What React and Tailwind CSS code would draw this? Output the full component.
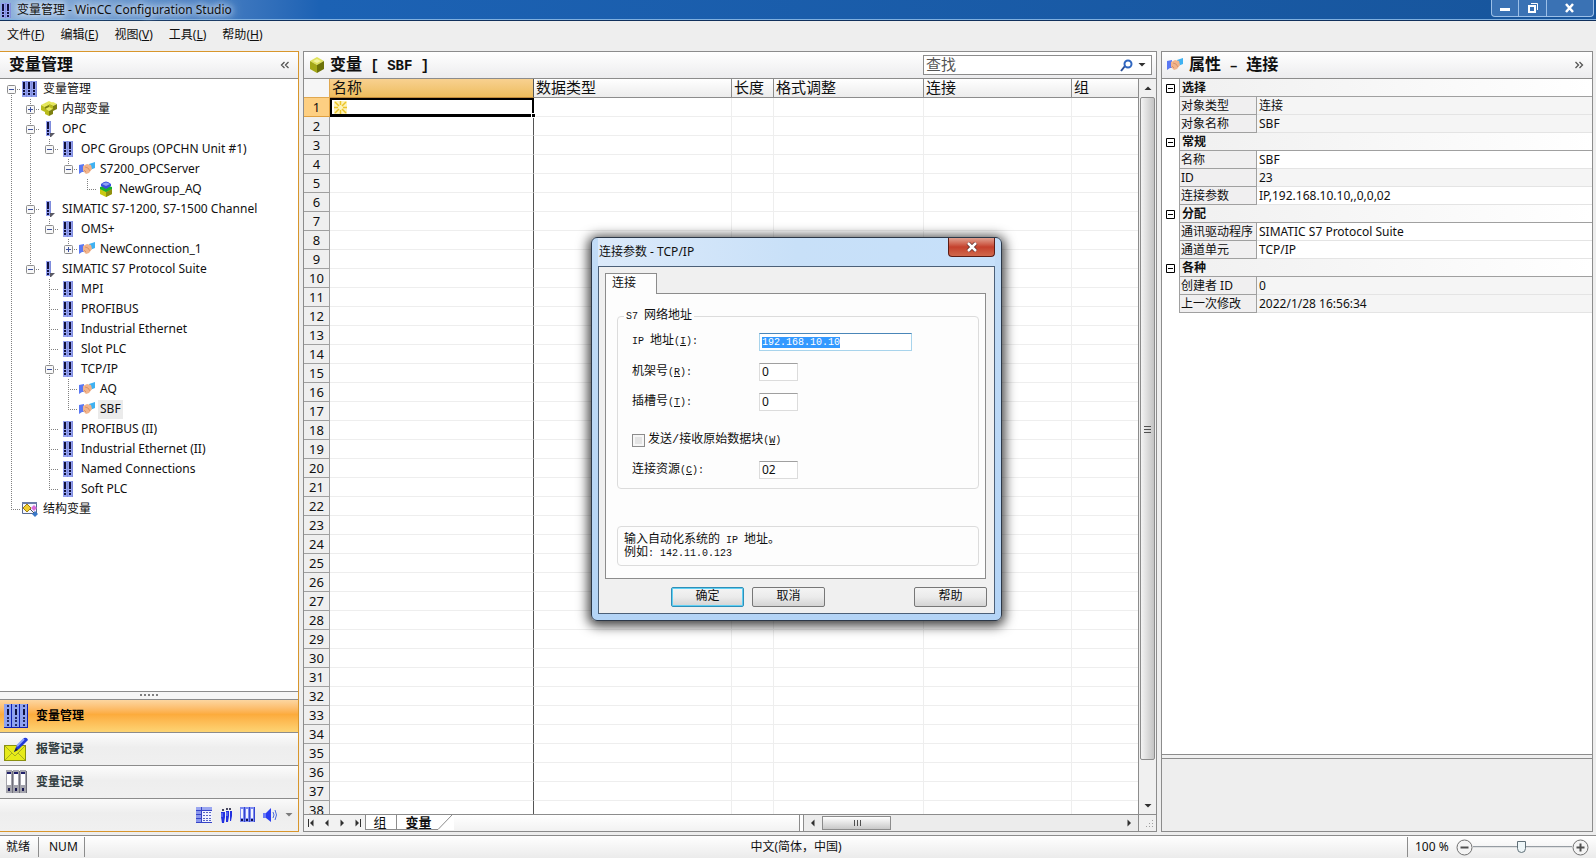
import React, { useEffect, useRef } from 'react';

const TREE = [
  { guides: 'f', box: 'minus', icon: 'root', label: '变量管理' },
  { guides: '|t', box: 'plus', icon: 'cubes', label: '内部变量' },
  { guides: '|t', box: 'minus', icon: 'driver', label: 'OPC' },
  { guides: '||l', box: 'minus', icon: 'unit', label: 'OPC Groups (OPCHN Unit #1)' },
  { guides: '|| l', box: 'minus', icon: 'link', label: 'S7200_OPCServer' },
  { guides: '||  l', icon: 'group', label: 'NewGroup_AQ' },
  { guides: '|t', box: 'minus', icon: 'driver', label: 'SIMATIC S7-1200, S7-1500 Channel' },
  { guides: '||l', box: 'minus', icon: 'unit', label: 'OMS+' },
  { guides: '|| l', box: 'plus', icon: 'link', label: 'NewConnection_1' },
  { guides: '|l', box: 'minus', icon: 'driver', label: 'SIMATIC S7 Protocol Suite' },
  { guides: '| t', icon: 'unit', label: 'MPI' },
  { guides: '| t', icon: 'unit', label: 'PROFIBUS' },
  { guides: '| t', icon: 'unit', label: 'Industrial Ethernet' },
  { guides: '| t', icon: 'unit', label: 'Slot PLC' },
  { guides: '| t', box: 'minus', icon: 'unit', label: 'TCP/IP' },
  { guides: '| |t', icon: 'link', label: 'AQ' },
  { guides: '| |l', icon: 'link', label: 'SBF', selected: true },
  { guides: '| t', icon: 'unit', label: 'PROFIBUS (II)' },
  { guides: '| t', icon: 'unit', label: 'Industrial Ethernet (II)' },
  { guides: '| t', icon: 'unit', label: 'Named Connections' },
  { guides: '| l', icon: 'unit', label: 'Soft PLC' },
  { guides: 'l', icon: 'struct', label: '结构变量' },
];

const MENUS = [
  ['文件', 'F'],
  ['编辑', 'E'],
  ['视图', 'V'],
  ['工具', 'L'],
  ['帮助', 'H'],
];

const PROPERTIES = [
  { title: '选择', rows: [['对象类型', '连接'], ['对象名称', 'SBF']] },
  { title: '常规', rows: [['名称', 'SBF', true], ['ID', '23'], ['连接参数', 'IP,192.168.10.10,,0,0,02', true]] },
  { title: '分配', rows: [['通讯驱动程序', 'SIMATIC S7 Protocol Suite', true], ['通道单元', 'TCP/IP', true]] },
  { title: '各种', rows: [['创建者 ID', '0'], ['上一次修改', '2022/1/28 16:56:34']] },
];

/* ---------- icons ---------- */

const Bar = ({ x, h = 16 }) => (
  <g>
    <rect x={x} y="0" width="5" height={h} fill="#93a0f0" />
    <rect x={x + 4} y="0" width="1" height={h} fill="#7f8cdc" />
    <rect x={x + 1} y="1" width="2" height="7" fill="#10103c" />
    <rect x={x + 1} y="9" width="2" height="2" fill="#10103c" />
    <rect x={x + 1} y="12" width="2" height="2" fill="#10103c" />
  </g>
);

const RootIcon = () => (
  <svg width="16" height="16" viewBox="0 0 16 16">
    <Bar x={0} /><Bar x={5} /><Bar x={10} />
  </svg>
);

const UnitIcon = () => (
  <svg width="16" height="16" viewBox="0 0 16 16">
    <Bar x={3} /><Bar x={8} />
  </svg>
);

const DriverIcon = () => (
  <svg width="16" height="16" viewBox="0 0 16 16">
    <Bar x={5} h={15} />
    <path d="M9 12h5l-4 4H9z" fill="#5a5a66" />
  </svg>
);

const LinkIcon = () => (
  <svg width="16" height="16" viewBox="0 0 16 16">
    <path d="M0 4l5-1v8l-2 0-3 2z" fill="#5a78f4" />
    <path d="M10 3l6-2v6l-5 2z" fill="#3fb2f2" />
    <path d="M4 5l4-2 4 1 1 4-3 4-3 1-3-3z" fill="#f2b48c" />
    <path d="M6 6l3 1 2 3M5 9l2 2" stroke="#d8946c" fill="none" />
  </svg>
);

const Cube = ({ x, y }) => (
  <g transform={`translate(${x} ${y})`}>
    <path d="M0 2l4-2 4 2-4 2z" fill="#e6e85a" />
    <path d="M0 2l4 2v5l-4-2z" fill="#b9bc1c" />
    <path d="M8 2l-4 2v5l4-2z" fill="#7d8010" />
  </g>
);

const CubesIcon = () => (
  <svg width="16" height="16" viewBox="0 0 16 16">
    <Cube x={4} y={0} /><Cube x={0} y={2} /><Cube x={8} y={1} /><Cube x={4} y={6} />
  </svg>
);

const GroupIcon = () => (
  <svg width="16" height="16" viewBox="0 0 16 16">
    <path d="M2 8l6-3 6 3v5l-6 3-6-3z" fill="#c9c912" />
    <path d="M8 11l6-3v5l-6 3z" fill="#8f9010" />
    <path d="M2 6l6-2 6 2v2l-6 3-6-3z" fill="#18b030" />
    <path d="M3 3q5-5 10 0v2l-5 3-5-3z" fill="#3a50e0" />
    <path d="M4 3q4-3 8 0l-4 2z" fill="#8ea2f8" />
  </svg>
);

const StructIcon = () => (
  <svg width="16" height="16" viewBox="0 0 16 16">
    <path d="M.5 1.500h14v11H.5z" fill="#f4f6ff" stroke="#5a6a90" />
    <rect x="0" y="1" width="15" height="2" fill="#6a7ca8" />
    <path d="M5 3l4 4-4 4-4-4z" fill="#f0cc30" stroke="#a08010" />
    <path d="M12 4l3 3-3 3-3-3z" fill="#d86ad8" />
    <path d="M13 10l3 3-3 3-3-3z" fill="#3a78c8" />
    <path d="M8 8l4 4" stroke="#555" />
  </svg>
);

const TREE_ICONS = {
  root: RootIcon,
  cubes: CubesIcon,
  driver: DriverIcon,
  unit: UnitIcon,
  link: LinkIcon,
  group: GroupIcon,
  struct: StructIcon,
};

const BigCubeIcon = () => (
  <svg width="16" height="16" viewBox="0 0 16 16">
    <path d="M1 4l7-4 7 4-7 4z" fill="#dfe25a" />
    <path d="M1 4l7 4v8l-7-4z" fill="#a3a818" />
    <path d="M15 4l-7 4v8l7-4z" fill="#6d7208" />
    <path d="M4 4l4-2 4 2-4 2z" fill="#f2f4a0" />
  </svg>
);

const TagNavIcon = () => (
  <svg width="24" height="24" viewBox="0 0 24 24">
    <rect width="24" height="24" fill="#8ea2f0" />
    {[0, 8, 16].map((x) => (
      <g key={x}>
        <rect x={x + 7} y="0" width="1" height="24" fill="#1020b0" />
        <rect x={x + 3} y="1" width="2" height="2" fill="#222a66" />
        <rect x={x + 3} y="5" width="2" height="6" fill="#0c1040" />
        <rect x={x + 3} y="13" width="2" height="2" fill="#222a66" />
        <rect x={x + 3} y="16" width="2" height="2" fill="#222a66" />
        <rect x={x + 3} y="20" width="2" height="2" fill="#222a66" />
      </g>
    ))}
    <rect y="23" width="24" height="1" fill="#1020b0" />
  </svg>
);

const AlarmNavIcon = () => (
  <svg width="24" height="24" viewBox="0 0 24 24">
    <rect x="0.5" y="8.5" width="21" height="15" fill="#e6ea18" stroke="#8a9010" />
    <path d="M1 9l10 10L21 9M1 23l7-7M21 23l-7-7" fill="none" stroke="#a8ae20" />
    <path d="M10 15l2-5L20 1q3-1 4 2l-9 9z" fill="#2038d8" />
    <path d="M13 9l7-7" stroke="#8aa0ff" strokeWidth="2" />
    <path d="M10 15l2-4 2 2z" fill="#222" />
  </svg>
);

const LogNavIcon = () => (
  <svg width="24" height="24" viewBox="0 0 24 24">
    {[2, 9, 16].map((x) => (
      <g key={x}>
        <rect x={x} y="0" width="6" height="23" fill="#a4a4ac" />
        <rect x={x + 1} y="4" width="4" height="11" fill="#ffffff" />
        <rect x={x + 1} y="2" width="4" height="2" fill="#20206a" />
        <rect x={x + 2} y="18" width="2" height="3" fill="#181850" />
        <rect x={x + 6} y="1" width="1" height="22" fill="#70707a" />
      </g>
    ))}
  </svg>
);

const ListTrayIcon = () => (
  <svg width="16" height="16" viewBox="0 0 16 16">
    <rect width="16" height="16" fill="#f0f2ff" />
    <rect width="5" height="16" fill="#8a96ec" />
    <rect width="16" height="3" fill="#9aa6f0" />
    <path d="M0 3.500h16M0 7.500h5M0 11.500h5M0 15.500h16M5.500 0v16" stroke="#3644c8" />
    <path d="M7 5.500h9M7 8.500h9M7 11.500h9M7 13.500h9" stroke="#5864c0" strokeDasharray="2 1" />
  </svg>
);

const UsersTrayIcon = () => (
  <svg width="16" height="16" viewBox="0 0 16 16">
    <g fill="#101030">
      <circle cx="5" cy="3" r="1" /><circle cx="9" cy="2" r="1" /><circle cx="12" cy="2" r="1" />
    </g>
    <path d="M3 5h4v5l-1 6H4l-1-6zM8 4h3v5l-1 6H8zM12 4h2v5l-1 5h-1z" fill="#2230e0" />
    <path d="M4 6v4M9 5v4" stroke="#8a9cff" />
  </svg>
);

const LogTrayIcon = () => (
  <svg width="16" height="16" viewBox="0 0 16 16">
    {[0, 5, 10].map((x) => (
      <g key={x}>
        <rect x={x} y="0" width="5" height="15" fill="#7c8af0" />
        <rect x={x + 4} y="0" width="1" height="15" fill="#3444d0" />
        <rect x={x + 1} y="2" width="2" height="9" fill="#f2f4ff" />
        <rect x={x + 1} y="12" width="2" height="2" fill="#101050" />
      </g>
    ))}
  </svg>
);

const SpeakerTrayIcon = () => (
  <svg width="16" height="16" viewBox="0 0 16 16">
    <path d="M1 6h3v5H1z" fill="#6a7cf8" />
    <path d="M4 6l5-5v14l-5-4z" fill="#2a3cf0" />
    <path d="M11 5q2 3 0 6M13 3q3 5 0 10" fill="none" stroke="#4a6ae0" />
  </svg>
);

const Chevron = ({ dir }) => (
  <svg width="10" height="8" viewBox="0 0 10 8" fill="none" stroke="#555" strokeWidth="1.300">
    {dir === 'left' ? <path d="M4.500 1L1.500 4l3 3M8.500 1L5.500 4l3 3" /> : <path d="M1.500 1l3 3-3 3M5.500 1l3 3-3 3" />}
  </svg>
);

const Arrow = ({ dir, bar }) => {
  const paths = {
    up: 'M1.500 7L5 3.500 8.500 7z',
    down: 'M1.500 3h7L5 6.500z',
    left: 'M6.500 1.500v7L3 5z',
    right: 'M3.500 1.500v7L7 5z',
  };
  return (
    <svg width="10" height="10" viewBox="0 0 10 10" fill="#303030">
      <path d={paths[dir]} />
      {bar && <rect x={dir === 'left' ? 1 : 8} y="1" width="1" height="8" />}
    </svg>
  );
};

const SearchIcon = () => (
  <svg width="13" height="13" viewBox="0 0 13 13" fill="none">
    <path d="M1 12l4-5" stroke="#2a4e96" strokeWidth="2" />
    <circle cx="8" cy="5" r="3.500" stroke="#2f66c0" strokeWidth="2" />
  </svg>
);

/* ---------- left panel ---------- */

const Guide = ({ kind, box }) => (
  <svg width="19" height="20" viewBox="0 0 19 20" className="block">
    <g stroke="#808080" strokeDasharray="1 1">
      {(kind === '|' || kind === 't' || kind === 'l') && <path d="M9.500 0v10" />}
      {(kind === '|' || kind === 't' || kind === 'f') && <path d="M9.500 10v10" />}
      {kind !== '|' && kind !== ' ' && <path d="M9 10.500h10" />}
    </g>
    {box && (
      <g>
        <rect x="5.500" y="6.500" width="8" height="8" rx="1" fill="#f8f8f8" stroke="#8c8c8c" />
        <path d="M7 10.500h5" stroke="#3c50a0" />
        {box === 'plus' && <path d="M9.500 8v5" stroke="#3c50a0" />}
      </g>
    )}
  </svg>
);

const TreeRow = ({ guides, box, icon, label, selected }) => {
  const Icon = TREE_ICONS[icon];
  const cells = guides.split('');
  return (
    <li className="flex h-5 items-center pl-0.5">
      {cells.map((kind, i) =>
        box && i === cells.length - 1 ? (
          <button key={i} type="button" aria-label={label}>
            <Guide kind={kind} box={box} />
          </button>
        ) : (
          <Guide key={i} kind={kind} />
        )
      )}
      <span className="ml-px shrink-0"><Icon /></span>
      <span className={`ml-[3px] px-0.5 pb-0.5 leading-[17px] whitespace-nowrap ${selected ? 'bg-[#ebebeb]' : ''}`}>{label}</span>
    </li>
  );
};

const PanelHeader = ({ children }) => (
  <header className="flex h-[27px] shrink-0 items-center border-b border-[#8c8c8c] bg-linear-to-b from-white to-[#ececee]">
    {children}
  </header>
);

const NavButton = ({ icon, label, active }) => (
  <button
    type="button"
    className={`flex h-[33px] items-center gap-2 border-t border-[#8c8c8c] pl-1 text-left font-bold ${
      active
        ? 'bg-linear-to-b from-[#fcd6a0] via-[#fcab3c] via-45% to-[#fdd473] text-black'
        : 'bg-linear-to-b from-[#fcfcfc] via-[#eeeeee] via-45% to-[#f0f0f0] text-[#303c40]'
    }`}
  >
    {icon}
    {label}
  </button>
);

const Navigator = () => (
  <aside className="flex w-[299px] shrink-0 flex-col border-t border-r border-b border-[#d8962c] bg-white">
    <PanelHeader>
      <h2 className="flex-1 pb-0.5 pl-[9px] text-base font-bold">变量管理</h2>
      <button type="button" aria-label="折叠" className="mr-2"><Chevron dir="left" /></button>
    </PanelHeader>
    <ul className="min-h-0 flex-1 overflow-hidden">
      {TREE.map((row) => <TreeRow key={row.label} {...row} />)}
    </ul>
    <div className="flex h-2 shrink-0 items-center justify-center gap-0.5 border-t border-[#8c8c8c] bg-[#f6f6f6] pb-0.5">
      {[0, 1, 2, 3, 4].map((i) => <span key={i} className="h-0.5 w-0.5 bg-[#808080]" />)}
    </div>
    <NavButton icon={<TagNavIcon />} label="变量管理" active />
    <NavButton icon={<AlarmNavIcon />} label="报警记录" />
    <NavButton icon={<LogNavIcon />} label="变量记录" />
    <div className="flex h-[33px] items-center justify-end gap-[6px] border-t border-[#8c8c8c] bg-linear-to-b from-[#fafafa] via-[#eeeeee] via-45% to-[#f0f0f0] pr-1">
      <button type="button" aria-label="列表"><ListTrayIcon /></button>
      <button type="button" aria-label="用户"><UsersTrayIcon /></button>
      <button type="button" aria-label="归档"><LogTrayIcon /></button>
      <button type="button" aria-label="声音"><SpeakerTrayIcon /></button>
      <button type="button" aria-label="更多" className="opacity-60"><Arrow dir="down" /></button>
    </div>
  </aside>
);

/* ---------- tag grid ---------- */

const HEAD = 'h-[19px] border-r border-b border-[#8c8c8c] p-0 pb-0.5 pl-0.5 text-left text-[15px] leading-4 font-normal whitespace-nowrap';
const CELL = 'border-r border-b border-[#eeeeee] p-0';

const TagGrid = () => (
  <table className="w-full table-fixed border-separate border-spacing-0">
    <colgroup>
      <col className="w-[26px]" />
      <col className="w-[204px]" />
      <col className="w-[198px]" />
      <col className="w-[42px]" />
      <col className="w-[150px]" />
      <col className="w-[148px]" />
      <col />
    </colgroup>
    <thead>
      <tr className="bg-linear-to-b from-white to-[#ebebeb]">
        <th className="h-[19px] border-r border-b border-[#e0a850] bg-[#f6f6f6] p-0" />
        <th className={`${HEAD} border-r-[#555555] border-b-[#c08a3c] bg-linear-to-b from-[#f8d190] to-[#eebd5c]`}>名称</th>
        <th className={HEAD}>数据类型</th>
        <th className={HEAD}>长度</th>
        <th className={HEAD}>格式调整</th>
        <th className={HEAD}>连接</th>
        <th className="h-[19px] border-b border-[#8c8c8c] p-0 pb-0.5 pl-0.5 text-left text-[15px] leading-4 font-normal">组</th>
      </tr>
    </thead>
    <tbody>
      {Array.from({ length: 38 }, (_, i) => (
        <tr key={i}>
          <th
            className={`h-[19px] border-r border-b p-0 text-center text-[13px] leading-[18px] font-normal ${
              i === 0 ? 'border-[#e0a040] bg-[#fdcf82]' : 'border-[#a0a0a0] bg-[#efefef]'
            }`}
          >
            {i + 1}
          </th>
          {i === 0 ? (
            <td className="relative border-2 border-b-3 border-black p-0">
              <svg width="13" height="13" viewBox="0 0 13 13" className="ml-0.5 block" stroke="#ecc428" strokeWidth="1.500">
                <rect width="13" height="13" fill="#fdf2b8" stroke="none" />
                <path d="M6.500 0v4M6.500 9v4M0 6.500h4M9 6.500h4M1 1l4 4M12 1L8 5M1 12l4-4M12 12L8 8" />
              </svg>
              <span className="absolute -right-1 -bottom-1 h-[5px] w-[5px] border border-white bg-black" />
            </td>
          ) : (
            <td className="border-r border-b border-r-[#555555] border-b-[#eeeeee] p-0" />
          )}
          <td className={CELL} />
          <td className={CELL} />
          <td className={CELL} />
          <td className={CELL} />
          <td className="border-b border-[#eeeeee] p-0" />
        </tr>
      ))}
    </tbody>
  </table>
);

const SheetTabs = () => (
  <div className="flex h-[17px] shrink-0 border-t border-[#8c8c8c] bg-[#f2f2f2]">
    <div className="flex w-[61px] items-center justify-between px-[3px]">
      <button type="button" aria-label="第一个"><Arrow dir="left" bar /></button>
      <button type="button" aria-label="上一个"><Arrow dir="left" /></button>
      <button type="button" aria-label="下一个"><Arrow dir="right" /></button>
      <button type="button" aria-label="最后一个"><Arrow dir="right" bar /></button>
    </div>
    <button type="button" className="h-[15px] w-[31px] border-b border-l border-[#8c8c8c] bg-white pr-0.5 text-[13px] leading-[15px]">组</button>
    <button type="button" className="h-[15px] w-[40px] border-b border-l border-[#8c8c8c] bg-white pl-1 text-[13px] leading-[15px] font-bold">变量</button>
    <svg width="18" height="15" viewBox="0 0 18 15" className="bg-white">
      <path d="M0 14.500h2L16 0" fill="none" stroke="#8c8c8c" />
    </svg>
    <div className="flex-1 bg-linear-to-b from-white to-[#f2f2f2]" />
    <div className="w-[5px] border-x border-[#8c8c8c] bg-white" />
    <div className="flex w-[334px] items-center bg-[#ececec] pl-1">
      <button type="button" aria-label="向左滚动"><Arrow dir="left" /></button>
      <span className="ml-1 flex h-[14px] w-[69px] items-center justify-center gap-px border border-[#8c8c8c] bg-linear-to-b from-white to-[#c8c8c8]">
        {[0, 1, 2].map((i) => <i key={i} className="ml-px h-[6px] w-px bg-[#505050]" />)}
      </span>
      <button type="button" aria-label="向右滚动" className="mr-1 ml-auto"><Arrow dir="right" /></button>
    </div>
    <div className="flex w-[18px] items-end justify-end border-l border-[#8c8c8c] bg-[#f0f0f0] p-0.5">
      <svg width="9" height="9" viewBox="0 0 9 9" fill="#a0a0a0">
        <path d="M7 0h1v1H7zM4 3h1v1H4zM7 3h1v1H7zM1 6h1v1H1zM4 6h1v1H4zM7 6h1v1H7z" />
      </svg>
    </div>
  </div>
);

const Workspace = () => (
  <main className="flex min-w-0 flex-1 flex-col border border-[#8c8c8c] bg-white">
    <PanelHeader>
      <span className="ml-[5px]"><BigCubeIcon /></span>
      <h2 className="flex-1 pb-0.5 pl-[5px] text-base font-bold whitespace-pre">
        变量<span className="text-sm [font-family:'Liberation_Mono',monospace]"> [ SBF ]</span>
      </h2>
      <label className="mr-1 flex h-5 w-[229px] items-center border border-[#8c8c8c] bg-white pr-1">
        <input type="text" aria-label="查找" placeholder="查找" className="min-w-0 flex-1 pb-0.5 pl-0.5 text-[15px] leading-4 outline-none placeholder:text-[#555555]" />
        <SearchIcon />
        <span className="ml-1"><Arrow dir="down" /></span>
      </label>
    </PanelHeader>
    <div className="flex min-h-0 flex-1">
      <div className="min-w-0 flex-1 overflow-hidden">
        <TagGrid />
      </div>
      <div className="flex w-[18px] shrink-0 flex-col items-center border-l border-[#8c8c8c] bg-[#f0f0f0]">
        <button type="button" aria-label="向上滚动" className="flex h-[18px] items-center"><Arrow dir="up" /></button>
        <span className="flex w-[15px] flex-1 flex-col items-center justify-center gap-px rounded-xs border border-[#8c8c8c] bg-linear-to-r from-[#f4f4f4] to-[#c4c4c4]">
          {[0, 1, 2].map((i) => <i key={i} className="mt-px h-px w-[7px] bg-[#505050]" />)}
        </span>
        <button type="button" aria-label="向下滚动" className="mt-[38px] flex h-4 items-center"><Arrow dir="down" /></button>
      </div>
    </div>
    <SheetTabs />
  </main>
);

/* ---------- properties ---------- */

const Properties = () => (
  <aside className="mr-[3px] flex w-[432px] shrink-0 flex-col border border-[#8c8c8c] bg-white">
    <PanelHeader>
      <span className="ml-[5px]"><LinkIcon /></span>
      <h2 className="flex-1 pb-0.5 pl-[6px] text-base font-bold whitespace-pre">
        属性<span className="text-sm [font-family:'Liberation_Mono',monospace]"> – </span>连接
      </h2>
      <button type="button" aria-label="展开" className="mr-2"><Chevron dir="right" /></button>
    </PanelHeader>
    <div className="min-h-0 flex-1 border-b border-[#8c8c8c]">
      <table className="w-full table-fixed border-separate border-spacing-0 leading-[17px]">
        <colgroup>
          <col className="w-[18px]" />
          <col className="w-[77px]" />
          <col />
        </colgroup>
        {PROPERTIES.map(({ title, rows }) => (
          <tbody key={title}>
            <tr>
              <td className="h-[18px] border-r border-[#a0a0a0] p-0">
                <button type="button" aria-label={title} className="ml-1 block">
                  <svg width="9" height="9" viewBox="0 0 9 9" fill="none" stroke="#000">
                    <path d="M.5.5h8v8h-8zM2 4.500h5" />
                  </svg>
                </button>
              </td>
              <th colSpan={2} className="border-b border-[#a0a0a0] bg-linear-to-r from-[#f0f0f0] to-white p-0 pl-0.5 text-left font-bold">{title}</th>
            </tr>
            {rows.map(([name, value, editable]) => (
              <tr key={name}>
                <td className="h-[18px] border-r border-[#a0a0a0] p-0" />
                <th className="border-r border-b border-[#a0a0a0] bg-[#f0eff0] p-0 pl-px text-left font-normal whitespace-nowrap">{name}</th>
                <td className={`border-b border-[#e4e4e4] p-0 pl-0.5 ${editable ? 'bg-white' : 'bg-[#f5f5f5]'}`}>{value}</td>
              </tr>
            ))}
          </tbody>
        ))}
      </table>
    </div>
    <div className="h-[3px] shrink-0 bg-[#f0f0f0]" />
    <div className="h-[73px] shrink-0 border-t border-[#8c8c8c] bg-[#eeeeee]" />
  </aside>
);

/* ---------- connection dialog ---------- */

const Mono = ({ children }) => <span className="text-[10px] whitespace-pre">{children}</span>;

const Field = ({ id, label, hotkey, value }) => (
  <div className="flex h-[18px] items-center">
    <label htmlFor={id} className="w-[127px]">
      {label}<Mono>(<u>{hotkey}</u>):</Mono>
    </label>
    <input id={id} type="text" defaultValue={value} className="h-[18px] w-[39px] border border-[#dcdcdc] border-t-[#a0a0a0] bg-white px-0.5 pb-0.5 text-xs leading-4 [font-family:'Noto_Sans',sans-serif]" />
  </div>
);

const DialogButton = ({ children, primary }) => (
  <button
    type="button"
    className={`h-5 w-[73px] rounded-xs border bg-linear-to-b from-[#f4f4f4] via-[#ebebeb] to-[#d4d4d4] leading-[18px] ${
      primary ? 'border-[#2f8fb8] shadow-[inset_0_0_0_1px_#5fd0f4]' : 'border-[#777777]'
    }`}
  >
    {children}
  </button>
);

const ConnectionDialog = () => {
  const address = useRef(null);

  // The address is preselected when the dialog opens
  useEffect(() => {
    address.current.focus();
    address.current.select();
  }, []);

  return (
    <div
      role="dialog"
      aria-label="连接参数 - TCP/IP"
      className="absolute top-[237px] left-[591px] w-[411px] rounded-md border border-[#2c3848] bg-linear-to-b from-[#c2dcf6] to-[#b4d4f6] px-1.5 pb-1.5 shadow-[0_2px_12px_3px_rgba(0,0,0,0.75)]"
    >
      <div className="flex h-7 items-center bg-linear-to-r from-[#dceafa] via-[#c8e0f8] to-[#c6e0fa]">
        <h3 className="flex-1 pl-px">连接参数 - TCP/IP</h3>
        <button type="button" aria-label="关闭" className="flex h-[19px] w-[47px] items-center justify-center self-start rounded-b-sm border border-t-0 border-[#5c1c14] bg-linear-to-b from-[#e0a090] via-[#c4402c] to-[#d0684c]">
          <svg width="12" height="10" viewBox="0 0 12 10">
            <path d="M2 1l8 8M10 1L2 9" stroke="#5a2a28" strokeWidth="4" />
            <path d="M2 1l8 8M10 1L2 9" stroke="#fff" strokeWidth="2.500" />
          </svg>
        </button>
      </div>
      <div className="border border-[#4c6078] bg-[#f0f0f0] pt-1.5 pr-[7px] pb-1.5 pl-1.5 [font-family:'Liberation_Mono','Noto_Sans_CJK_SC',monospace]">
        <button type="button" className="relative -mb-px block h-[21px] w-[52px] border border-b-0 border-[#8c8c8c] bg-[#fdfdfd] pl-1.5 text-left">连接</button>
        <div className="mr-px border border-[#8c8c8c] bg-[#fdfdfd] pr-[6px] pb-3 pl-[11px]">
          <fieldset className="mt-[15px] rounded-sm border border-[#dcdcdc] pb-[9px] pl-[14px]">
            <legend className="-ml-2 px-0.5 leading-[14px]"><Mono>S7 </Mono>网络地址</legend>
            <div className="mt-[9px] flex flex-col gap-3">
              <div className="flex h-[18px] items-center">
                <label htmlFor="ip" className="w-[127px] pb-0.5">
                  <Mono>IP </Mono>地址<Mono>(<u>I</u>):</Mono>
                </label>
                <input
                  id="ip"
                  ref={address}
                  type="text"
                  defaultValue="192.168.10.10"
                  className="h-[18px] w-[153px] border border-[#a8d4ec] border-t-[#4a86b8] bg-white px-0.5 text-[10px] outline-none selection:bg-[#3399ff] selection:text-white"
                />
              </div>
              <Field id="rack" label="机架号" hotkey="R" value="0" />
              <Field id="slot" label="插槽号" hotkey="T" value="0" />
              <label className="mt-2 flex h-[18px] items-center gap-[3px]">
                <input type="checkbox" className="h-[13px] w-[13px] appearance-none border border-[#8c8c8c] bg-[#e4e4e4] shadow-[inset_0_0_0_2px_#f6f6f6]" />
                <span>发送/接收原始数据块<Mono>(<u>W</u>)</Mono></span>
              </label>
              <Field id="resource" label="连接资源" hotkey="C" value="02" />
            </div>
          </fieldset>
          <p className="mt-[37px] h-10 rounded-sm border border-[#dcdcdc] px-[6px] pt-[7px] leading-3">
            输入自动化系统的<Mono> IP </Mono>地址。
            <br />
            例如<Mono>: 142.11.0.123</Mono>
          </p>
        </div>
        <div className="mt-2 flex gap-2 pl-[66px]">
          <DialogButton primary>确定</DialogButton>
          <DialogButton>取消</DialogButton>
          <span className="ml-auto"><DialogButton>帮助</DialogButton></span>
        </div>
      </div>
    </div>
  );
};

/* ---------- window chrome ---------- */

const TitleBar = () => (
  <div className="flex h-[21px] shrink-0 items-start border-b border-[#10305c] bg-linear-to-r from-[#8fb2da] via-[#1c62b4] via-20% to-[#17559c] shadow-[inset_0_-1px_0_#7fb0e0]">
    <span className="mt-[3px]">
      <svg width="12" height="15" viewBox="0 0 12 15">
        <Bar x={1} h={15} /><Bar x={6} h={15} />
      </svg>
    </span>
    <h1 className="flex-1 pl-[5px] leading-5 [text-shadow:0_0_6px_#ffffff,0_0_10px_#e0ecfa,0_0_14px_#c0d8f0]">变量管理 - WinCC Configuration Studio</h1>
    <div className="mr-0.5 flex h-[17px] rounded-b-sm border border-t-0 border-[#9cc0e8] bg-[#3a72b4] text-white">
      <button type="button" aria-label="最小化" className="flex w-[27px] items-center justify-center border-r border-[#9cc0e8]">
        <svg width="12" height="12" viewBox="0 0 12 12"><rect x="1" y="6" width="10" height="3" fill="#fff" /></svg>
      </button>
      <button type="button" aria-label="还原" className="flex w-[28px] items-center justify-center border-r border-[#9cc0e8]">
        <svg width="12" height="12" viewBox="0 0 12 12" fill="none" stroke="#fff">
          <path d="M4 1.500h6.500V8" />
          <rect x="2" y="4" width="6" height="6" strokeWidth="2" />
        </svg>
      </button>
      <button type="button" aria-label="关闭窗口" className="flex w-[46px] items-center justify-center">
        <svg width="12" height="10" viewBox="0 0 12 10"><path d="M2 1l7 8M9 1L2 9" stroke="#fff" strokeWidth="2.500" /></svg>
      </button>
    </div>
  </div>
);

const MenuBar = () => (
  <nav className="flex h-[30px] shrink-0 items-center gap-4 pb-0.5 pl-[7px]">
    {MENUS.map(([label, key]) => (
      <button key={key} type="button">{label}(<u>{key}</u>)</button>
    ))}
  </nav>
);

const ZoomButton = ({ label, plus }) => (
  <button type="button" aria-label={label}>
    <svg width="17" height="17" viewBox="0 0 17 17" className="block">
      <circle cx="8.500" cy="8.500" r="7.500" fill="#f4f4f4" stroke="#707070" />
      <path d="M4.500 8.500h8" stroke="#505050" strokeWidth="2" />
      {plus && <path d="M8.500 4.500v8" stroke="#505050" strokeWidth="2" />}
    </svg>
  </button>
);

const StatusBar = () => (
  <footer className="mt-[3px] flex h-[23px] shrink-0 items-center border-t border-[#8c8c8c] bg-linear-to-b from-white to-[#ebebeb]">
    <span className="flex h-5 w-[39px] items-center border-r border-[#8c8c8c] pl-[6px]">就绪</span>
    <span className="flex h-5 w-[46px] items-center border-r border-[#8c8c8c] pl-[10px]">NUM</span>
    <span className="flex-1 pl-[100px] text-center">
      中文(简体，中国)
    </span>
    <div className="flex h-5 w-[189px] items-center border-l border-[#8c8c8c] pl-[7px]">
      <label htmlFor="zoom" className="w-[41px] whitespace-nowrap">100 %</label>
      <ZoomButton label="缩小" />
      <input
        id="zoom"
        type="range"
        defaultValue="49"
        className="h-4 w-[99px] appearance-none bg-linear-to-b from-transparent from-45% via-[#808890] via-45% to-transparent to-55% [&::-webkit-slider-thumb]:h-3 [&::-webkit-slider-thumb]:w-[9px] [&::-webkit-slider-thumb]:appearance-none [&::-webkit-slider-thumb]:rounded-b-full [&::-webkit-slider-thumb]:border [&::-webkit-slider-thumb]:border-[#607078] [&::-webkit-slider-thumb]:bg-[#eef6f8]"
      />
      <ZoomButton label="放大" plus />
    </div>
  </footer>
);

export default function App() {
  return (
    <div className="relative flex h-screen flex-col overflow-hidden bg-[#eeeeee] text-xs text-[#101010] [font-family:'Noto_Sans','Noto_Sans_CJK_SC',sans-serif]">
      <TitleBar />
      <MenuBar />
      <div className="flex min-h-0 flex-1 gap-1">
        <Navigator />
        <Workspace />
        <Properties />
      </div>
      <StatusBar />
      <ConnectionDialog />
    </div>
  );
}
